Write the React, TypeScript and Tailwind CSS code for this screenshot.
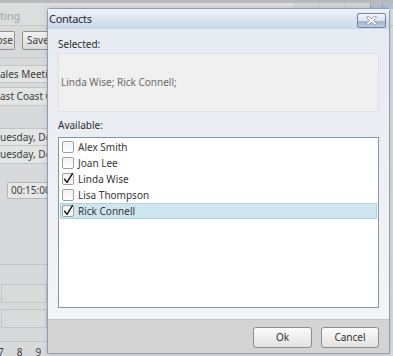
import React from "react";

const contacts = [
  { name: "Alex Smith", checked: false },
  { name: "Joan Lee", checked: false },
  { name: "Linda Wise", checked: true },
  { name: "Lisa Thompson", checked: false },
  { name: "Rick Connell", checked: true, active: true },
];

function CheckBox({ checked }: { checked: boolean }) {
  return (
    <span className="relative flex h-[12px] w-[12px] shrink-0 rounded-[2px] border border-[#9c9fa3] bg-gradient-to-b from-[#f4f4f4] to-white">
      {checked && (
        <svg className="absolute left-[-1px] top-[-3px] h-[14px] w-[13px]" viewBox="0 0 13 14" fill="none">
          <path d="M2.6 8.2 L5 11.4 L10.4 2.6" stroke="#1c1c1c" strokeWidth={1.5} strokeLinecap="round" strokeLinejoin="round" />
        </svg>
      )}
    </span>
  );
}

// the form behind the modal, only its left strip shows
function BackgroundForm() {
  return (
    <div className="flex w-full flex-col text-[10px] text-[#3d3d3d]">
      <div className="h-[3px] bg-[#b7b9bb]" />
      <div className="flex h-[23px] items-start border-b border-[#c6c7c8] bg-[#dcdddd]">
        <span className="mt-[5px] text-[11px] text-[#a3a3a3]">ting</span>
        <div className="ml-auto flex h-[6px] items-stretch">
          <div className="w-[25px] border-l border-[#c9cbcd] bg-[#d3d6d8]" />
          <div className="w-[25px] border-l border-[#c9cbcd] bg-[#d3d6d8]" />
          <div className="w-[26px] border-l border-[#c9cbcd] bg-[#d3d6d8]" />
          <div className="w-[12px] border-l border-[#8fa6c2] bg-[#b3c2d3]" />
          <div className="w-[11px] border-l border-[#8fa6c2] bg-[#b3c2d3]" />
        </div>
      </div>
      <div className="flex w-[47px] flex-col overflow-hidden whitespace-nowrap">
        <div className="mt-[5px] flex h-[19px] gap-[7px]">
          <button className="flex h-full w-[15px] shrink-0 items-center justify-end rounded-r-[2px] border border-l-0 border-[#909090] bg-gradient-to-b from-[#f2f2f2] to-[#dadada] pr-[1px]">
            ose
          </button>
          <button className="flex h-full w-[44px] shrink-0 items-center rounded-[2px] border border-[#909090] bg-gradient-to-b from-[#f2f2f2] to-[#dadada] pl-[4px]">
            Save
          </button>
        </div>
        <div className="mt-[7px] h-px shrink-0 bg-[#c8c9ca]" />
        <div className="mt-[7px] flex h-[18px] shrink-0 items-center border-y border-[#c4c5c6] bg-[#e3e4e4]">ales Meeting</div>
        <div className="mt-[4px] flex h-[19px] shrink-0 items-center border-y border-[#c4c5c6] bg-[#e3e4e4]">ast Coast Office</div>
        <div className="mt-[22px] flex h-[18px] shrink-0 items-center border-y border-[#c4c5c6] bg-[#e3e4e4]">uesday, Dec</div>
        <div className="flex h-[18px] shrink-0 items-center border-b border-[#c4c5c6] bg-[#e3e4e4]">uesday, Dec</div>
        <div className="ml-[7px] mt-[18px] flex h-[17px] w-[60px] shrink-0 items-center rounded-l-[2px] border border-[#b3b4b5] bg-[#e6e7e7] pl-[3px]">
          00:15:00
        </div>
        <div className="mt-[65px] h-px shrink-0 bg-[#c3c4c5]" />
        <div className="ml-[1px] mt-[19px] h-[19px] shrink-0 border border-[#c3c4c5] bg-[#d9dada]" />
        <div className="ml-[1px] mt-[6px] h-[19px] shrink-0 border border-[#c3c4c5] bg-[#d9dada]" />
        <div className="mt-[13px] h-px shrink-0 bg-[#c3c4c5]" />
        <div className="mt-[3px] flex h-[14px] shrink-0 items-center gap-[13px]">
          <span className="ml-[-2px]">7</span>
          <span>8</span>
          <span>9</span>
        </div>
      </div>
    </div>
  );
}

function ContactsDialog() {
  return (
    <div className="absolute left-[47px] top-[8px] flex h-[346px] w-[343px] flex-col rounded-t-[3px] border border-[#8e9fb3] shadow-[0_0_4px_rgba(0,0,0,0.15)]">
      {/* title bar */}
      <div className="flex h-[20px] items-center justify-between bg-gradient-to-b from-[#eef3f9] to-[#c9d7e8] pr-[3px]">
        <span className="pl-[1px] text-[11px] tracking-[-0.3px] text-[#1e2836]">Contacts</span>
        <button className="relative mt-[2px] flex h-[15px] w-[29px] items-center justify-center overflow-hidden rounded-[2px] border border-[#73839a] bg-[linear-gradient(to_bottom,#f2f5f9_0%,#dfe6ef_50%,#9db4d2_52%,#bccce0_100%)]">
          <svg className="h-[9px] w-[11px]" viewBox="0 0 11 9" fill="none">
            <path d="M2 1.5 L9 7.5 M9 1.5 L2 7.5" stroke="#8393a8" strokeWidth={3.2} strokeLinecap="round" />
            <path d="M2 1.5 L9 7.5 M9 1.5 L2 7.5" stroke="#ffffff" strokeWidth={1.8} strokeLinecap="round" />
          </svg>
        </button>
      </div>

      {/* body */}
      <div className="flex flex-1 flex-col bg-gradient-to-b from-[#e6ebf2] to-[#f3f4f6] px-[10px] pt-[8px] text-[10px]">
        <div className="h-[15px] leading-[15px] text-[#2b2b2b]">Selected:</div>
        <div className="mt-[1px] flex h-[59px] items-center border border-[#dfe1e4] bg-[#f0f0f0] pl-[2px] text-[#6a6a6a]">
          Linda Wise; Rick Connell;
        </div>
        <div className="mt-[6px] h-[15px] leading-[15px] text-[#2b2b2b]">Available:</div>
        <div className="mt-[4px] flex h-[171px] flex-col border border-[#8796a5] bg-white p-[1px] text-[#363636]">
          {contacts.map((c) => (
            <div
              key={c.name}
              className={`flex h-[16px] items-center gap-[4px] pl-[1px] ${
                c.active ? "border border-[#a6d4e2] bg-[#cfe6ef]" : "border border-transparent"
              }`}
            >
              <CheckBox checked={c.checked} />
              <span>{c.name}</span>
            </div>
          ))}
        </div>
      </div>

      {/* footer */}
      <div className="flex h-[34px] items-start justify-end gap-[9px] border-t border-[#c4c6c9] bg-[#d4d4d4] px-[10px] pt-[7px] text-[10px] text-[#333]">
        <button className="flex h-[21px] w-[59px] items-center justify-center rounded-[3px] border border-[#8b8b8b] bg-gradient-to-b from-[#fbfbfb] to-[#e2e2e2]">
          Ok
        </button>
        <button className="flex h-[21px] w-[58px] items-center justify-center rounded-[3px] border border-[#8b8b8b] bg-gradient-to-b from-[#fbfbfb] to-[#e2e2e2]">
          Cancel
        </button>
      </div>
    </div>
  );
}

export default function App() {
  return (
    <div className="relative h-[356px] w-[393px] overflow-hidden bg-[#d8d9da] font-['Noto_Sans','Open_Sans',sans-serif]">
      <BackgroundForm />
      <ContactsDialog />
    </div>
  );
}
